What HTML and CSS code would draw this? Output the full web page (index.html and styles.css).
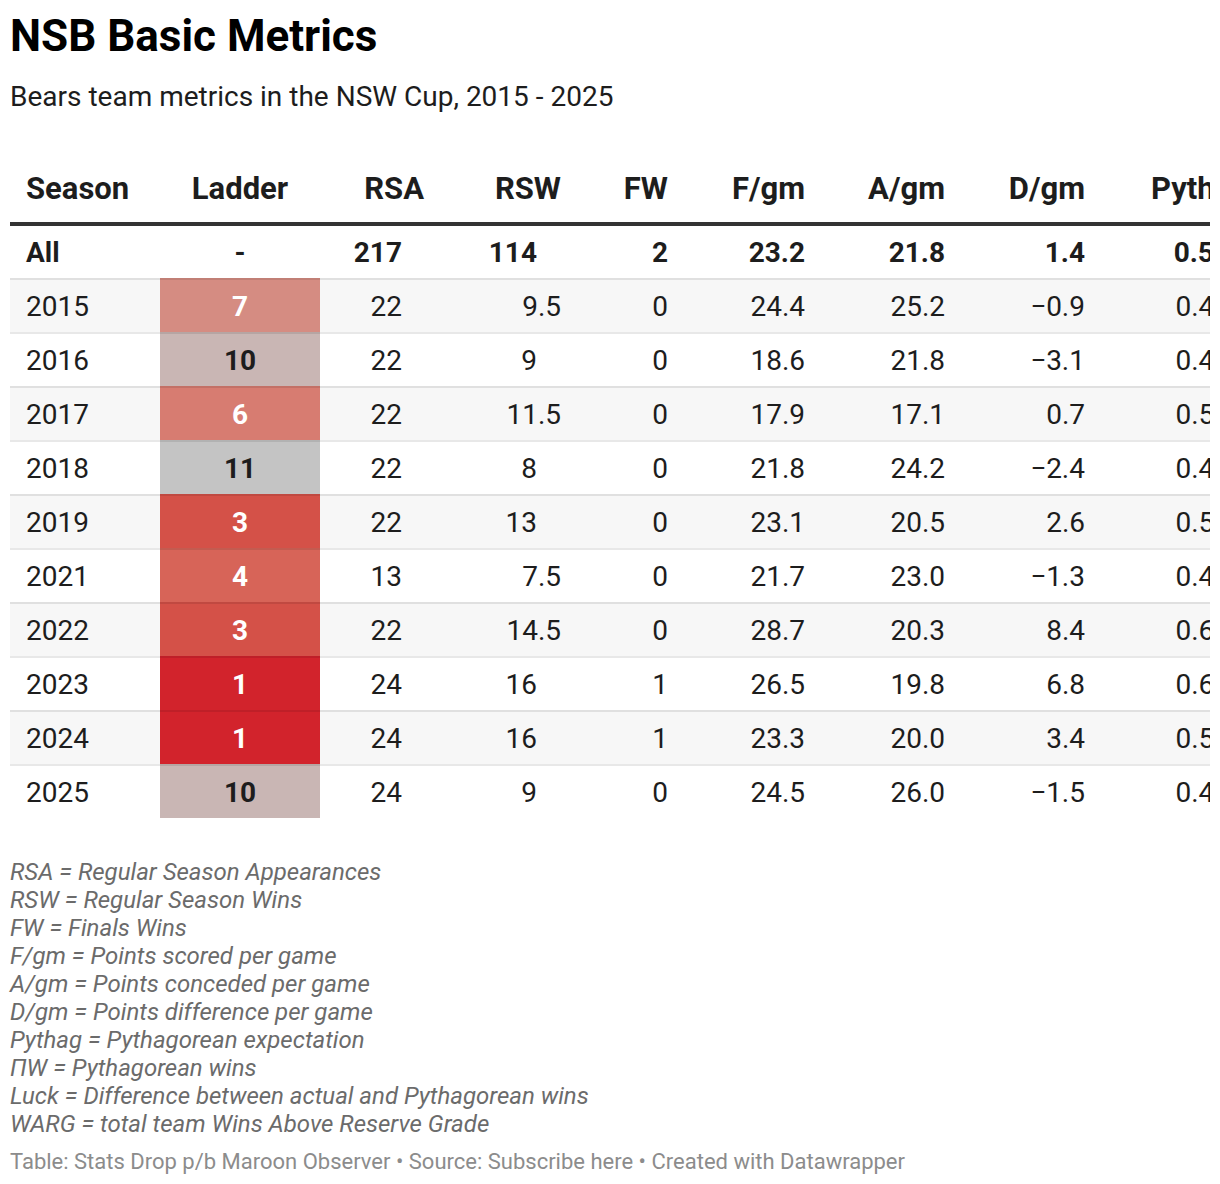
FILE: index.html
```html
<!DOCTYPE html>
<html>
<head>
<meta charset="utf-8">
<link rel="stylesheet" href="styles.css">
</head>
<body>
<div class="chart">
  <h1 class="title">NSB Basic Metrics</h1>
  <p class="subtitle">Bears team metrics in the NSW Cup, 2015 - 2025</p>
  <div class="table-wrap">
    <table class="metrics">
      <colgroup>
        <col class="c-season"><col class="c-ladder"><col class="c-rsa"><col class="c-rsw"><col class="c-fw"><col class="c-f"><col class="c-a"><col class="c-d"><col class="c-py"><col class="c-pw"><col class="c-luck"><col class="c-warg">
      </colgroup>
      <thead>
        <tr>
          <th class="left">Season</th><th class="center">Ladder</th><th>RSA</th><th>RSW</th><th>FW</th><th>F/gm</th><th>A/gm</th><th>D/gm</th><th class="py">Pythag</th><th>ΠW</th><th>Luck</th><th>WARG</th>
        </tr>
      </thead>
      <tbody>
        <tr class="total">
          <td class="left">All</td><td class="center">-</td><td class="pad-rsa">217</td><td class="pad-int">114</td><td>2</td><td>23.2</td><td>21.8</td><td>1.4</td><td class="py">0.53</td><td>115.8</td><td>0.2</td><td>12.1</td>
        </tr>
        <tr class="shade">
          <td class="left">2015</td><td class="lad l7">7</td><td class="pad-rsa">22</td><td>9.5</td><td>0</td><td>24.4</td><td>25.2</td><td>−0.9</td><td class="py">0.48</td><td>10.6</td><td>−1.1</td><td>0.4</td>
        </tr>
        <tr>
          <td class="left">2016</td><td class="lad l10">10</td><td class="pad-rsa">22</td><td class="pad-int">9</td><td>0</td><td>18.6</td><td>21.8</td><td>−3.1</td><td class="py">0.42</td><td>9.3</td><td>−0.3</td><td>0.2</td>
        </tr>
        <tr class="shade">
          <td class="left">2017</td><td class="lad l6">6</td><td class="pad-rsa">22</td><td>11.5</td><td>0</td><td>17.9</td><td>17.1</td><td>0.7</td><td class="py">0.52</td><td>11.5</td><td>0.0</td><td>1.0</td>
        </tr>
        <tr>
          <td class="left">2018</td><td class="lad l11">11</td><td class="pad-rsa">22</td><td class="pad-int">8</td><td>0</td><td>21.8</td><td>24.2</td><td>−2.4</td><td class="py">0.45</td><td>9.9</td><td>−1.9</td><td>0.3</td>
        </tr>
        <tr class="shade">
          <td class="left">2019</td><td class="lad l3">3</td><td class="pad-rsa">22</td><td class="pad-int">13</td><td>0</td><td>23.1</td><td>20.5</td><td>2.6</td><td class="py">0.56</td><td>12.3</td><td>0.7</td><td>1.6</td>
        </tr>
        <tr>
          <td class="left">2021</td><td class="lad l4">4</td><td class="pad-rsa">13</td><td>7.5</td><td>0</td><td>21.7</td><td>23.0</td><td>−1.3</td><td class="py">0.47</td><td>6.1</td><td>1.4</td><td>0.9</td>
        </tr>
        <tr class="shade">
          <td class="left">2022</td><td class="lad l3">3</td><td class="pad-rsa">22</td><td>14.5</td><td>0</td><td>28.7</td><td>20.3</td><td>8.4</td><td class="py">0.67</td><td>14.7</td><td>−0.2</td><td>2.2</td>
        </tr>
        <tr>
          <td class="left">2023</td><td class="lad l1">1</td><td class="pad-rsa">24</td><td class="pad-int">16</td><td>1</td><td>26.5</td><td>19.8</td><td>6.8</td><td class="py">0.64</td><td>15.4</td><td>0.6</td><td>2.5</td>
        </tr>
        <tr class="shade">
          <td class="left">2024</td><td class="lad l1">1</td><td class="pad-rsa">24</td><td class="pad-int">16</td><td>1</td><td>23.3</td><td>20.0</td><td>3.4</td><td class="py">0.58</td><td>13.9</td><td>2.1</td><td>1.8</td>
        </tr>
        <tr>
          <td class="left">2025</td><td class="lad l10">10</td><td class="pad-rsa">24</td><td class="pad-int">9</td><td>0</td><td>24.5</td><td>26.0</td><td>−1.5</td><td class="py">0.47</td><td>11.3</td><td>−2.3</td><td>0.5</td>
        </tr>
      </tbody>
    </table>
  </div>
  <div class="notes">
    <p>RSA = Regular Season Appearances</p>
    <p>RSW = Regular Season Wins</p>
    <p>FW = Finals Wins</p>
    <p>F/gm = Points scored per game</p>
    <p>A/gm = Points conceded per game</p>
    <p>D/gm = Points difference per game</p>
    <p>Pythag = Pythagorean expectation</p>
    <p>ΠW = Pythagorean wins</p>
    <p>Luck = Difference between actual and Pythagorean wins</p>
    <p>WARG = total team Wins Above Reserve Grade</p>
  </div>
  <p class="footer">Table: Stats Drop p/b Maroon Observer • Source: Subscribe here • Created with Datawrapper</p>
</div>
</body>
</html>
```

FILE: styles.css
```css
html, body {
  margin: 0;
  padding: 0;
  background: #ffffff;
}
body {
  font-family: Roboto, "Liberation Sans", sans-serif;
  color: #1d1d1d;
}
.chart {
  padding: 10px 10px 0 10px;
  width: 1200px;
}
.title {
  margin: 0;
  font-size: 44px;
  line-height: 52px;
  font-weight: 700;
  color: #000;
}
.subtitle {
  margin: 19px 0 0 0;
  font-size: 28px;
  line-height: 32px;
  color: #1d1d1d;
}
.table-wrap {
  margin-top: 41px;
  width: 1200px;
  overflow: hidden;
}
.metrics {
  border-collapse: separate;
  border-spacing: 0;
  table-layout: fixed;
  width: 1640px;
  font-size: 28px;
}
.c-season { width: 150px; }
.c-ladder { width: 160px; }
.c-rsa { width: 120px; }
.c-rsw { width: 137px; }
.c-fw { width: 107px; }
.c-f { width: 137px; }
.c-a { width: 140px; }
.c-d { width: 140px; }
.c-py { width: 156px; }
.c-pw { width: 140px; }
.c-luck { width: 140px; }
.c-warg { width: 213px; }

.metrics th {
  font-weight: 700;
  font-size: 31px;
  text-align: right;
  padding: 0 16px;
  height: 68px;
  vertical-align: middle;
  border-bottom: 4px solid #333333;
  color: #1d1d1d;
  white-space: nowrap;
}
.metrics th.py { padding-right: 8px; }
.metrics td {
  text-align: right;
  padding: 0 16px;
  height: 52px;
  vertical-align: middle;
  border-top: 2px solid rgba(0, 0, 0, 0.09);
  white-space: nowrap;
}
.metrics tr.total td {
  border-top: none;
  font-weight: 700;
}
.metrics tr.shade td {
  background: #f7f7f7;
}
.metrics .left { text-align: left; }
.metrics .center { text-align: center; }
.metrics td.pad-rsa { padding-right: 38px; }
.metrics td.pad-int { padding-right: 40px; }
.metrics td.py { padding-right: 27px; }

.metrics td.lad {
  text-align: center;
  font-weight: 700;
  color: #ffffff;
}
.metrics tr td.l7 { background: #d58c82; }
.metrics tr td.l10 { background: #c9b6b4; color: #1d1d1d; }
.metrics tr td.l6 { background: #d77c71; }
.metrics tr td.l11 { background: #c4c4c4; color: #1d1d1d; }
.metrics tr td.l3 { background: #d45148; }
.metrics tr td.l4 { background: #d76458; }
.metrics tr td.l1 { background: #d2232c; }

.notes {
  margin-top: 40px;
  font-size: 24px;
  line-height: 28px;
  font-style: italic;
  color: #6b6b6b;
}
.notes p {
  margin: 0;
}
.footer {
  margin: 10px 0 0 0;
  font-size: 22px;
  line-height: 28px;
  color: #8c8c8c;
}
```
